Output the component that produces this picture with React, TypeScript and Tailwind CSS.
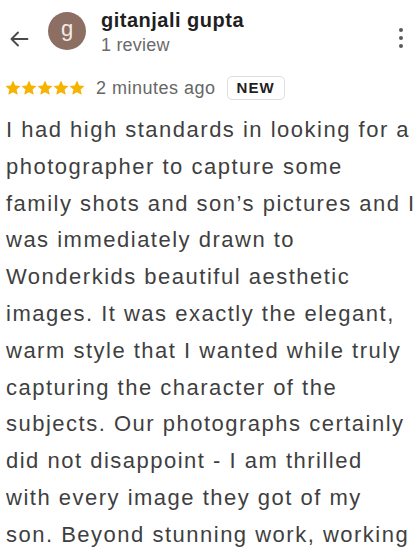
import React from "react";

const Star = () => (
  <svg width="16" height="16" viewBox="0 0 24 24" className="block">
    <path
      d="M12 0.8l3.4 7.3 7.9.8-5.9 5.4 1.7 7.9L12 18.2l-7.1 4 1.7-7.9L0.7 8.9l7.9-.8z"
      fill="#f6b400"
    />
  </svg>
);

const lines = [
  "I had high standards in looking for a",
  "photographer to capture some",
  "family shots and son\u2019s pictures and I",
  "was immediately drawn to",
  "Wonderkids beautiful aesthetic",
  "images. It was exactly the elegant,",
  "warm style that I wanted while truly",
  "capturing the character of the",
  "subjects. Our photographs certainly",
  "did not disappoint - I am thrilled",
  "with every image they got of my",
  "son. Beyond stunning work, working",
];

export default function App() {
  return (
    <div
      className="w-[420px] h-[560px] bg-white overflow-hidden"
      style={{ fontFamily: '"Liberation Sans", Arial, sans-serif' }}
    >
      <div className="flex h-[76px] pt-[12px]">
        <div className="w-[48px] pl-[9px] pt-[17px]">
          <svg width="20" height="20" viewBox="0 0 20 20" fill="none" className="block">
            <path
              d="M18.5 10H2.5M9 3.5L2.5 10L9 16.5"
              stroke="#4a4a4a"
              strokeWidth="1.9"
              strokeLinecap="round"
              strokeLinejoin="round"
            />
          </svg>
        </div>
        <div className="w-[38px] h-[38px] rounded-full bg-[#8d6e63] flex items-center justify-center">
          <span className="text-[22px] leading-none text-[#f3ebe6] -mt-[4px]">g</span>
        </div>
        <div className="ml-[15px] -mt-[2px]">
          <div className="text-[20px] leading-[20px] font-bold tracking-[0.5px] text-[#1f1f1f]">
            gitanjali gupta
          </div>
          <div className="mt-[3px] text-[18px] leading-[24px] text-[#6b6b6b] tracking-[0.2px]">
            1 review
          </div>
        </div>
        <div className="ml-auto mr-[17px] pt-[16px]">
          <svg width="4" height="20" viewBox="0 0 4 20" className="block">
            <circle cx="2" cy="2" r="2" fill="#5a5a5a" />
            <circle cx="2" cy="10" r="2" fill="#5a5a5a" />
            <circle cx="2" cy="18" r="2" fill="#5a5a5a" />
          </svg>
        </div>
      </div>

      <div className="flex items-center h-[24px] pl-[5px]">
        <div className="flex">
          <Star />
          <Star />
          <Star />
          <Star />
          <Star />
        </div>
        <span className="ml-[11px] text-[18px] leading-none tracking-[0.5px] text-[#666666]">
          2 minutes ago
        </span>
        <span className="ml-[11px] h-[24px] px-[9px] flex items-center rounded-[5px] border-[1.5px] border-[#dedede] text-[15px] font-bold tracking-[1px] text-[#1f1f1f]">
          NEW
        </span>
      </div>

      <div className="mt-[12px] pl-[6px] text-[22px] leading-[36.8px] tracking-[1.5px] text-[#3f3f3f]">
        {lines.map((l, i) => (
          <div key={i} className="whitespace-nowrap">
            {l}
          </div>
        ))}
      </div>
    </div>
  );
}
